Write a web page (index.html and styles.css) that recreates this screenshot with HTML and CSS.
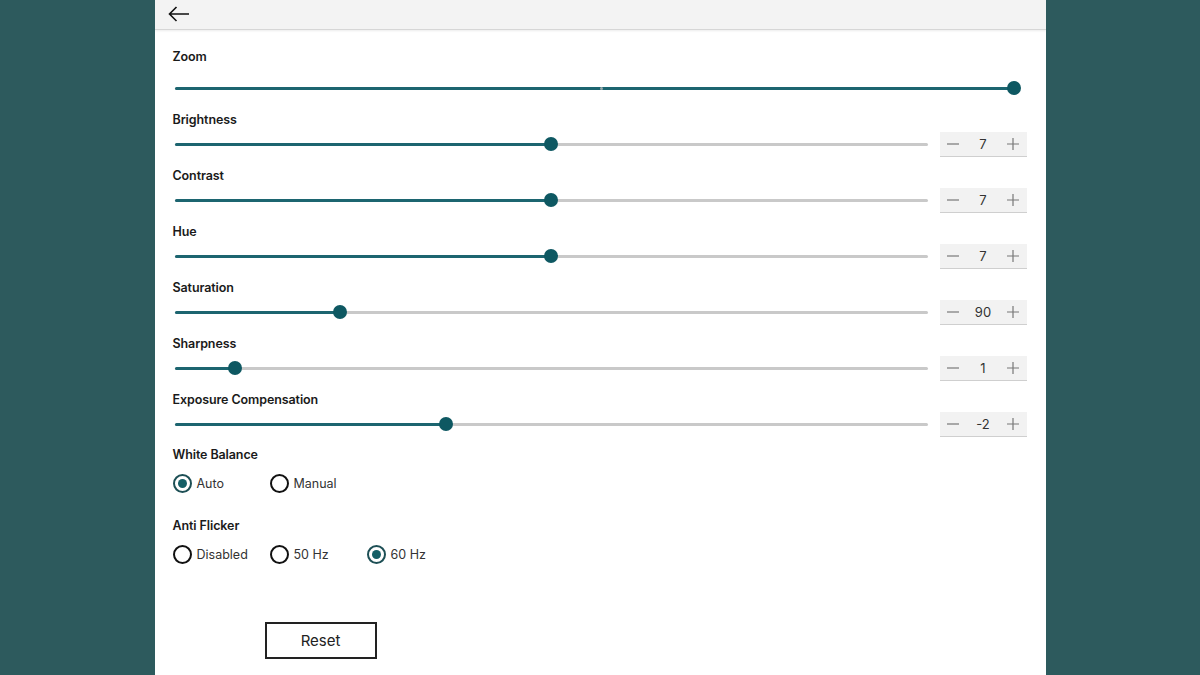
FILE: index.html
```html
<!DOCTYPE html>
<html lang="en">
<head>
    <meta charset="UTF-8">
    <title>Camera Settings</title>
    <link rel="stylesheet" href="styles.css">
</head>
<body>
    <div class="panel">
        <!-- header -->
        <div class="header">
            <svg class="back" width="22" height="16" viewBox="0 0 22 16">
                <path d="M21 8H1.5M8.5 1L1.5 8l7 7" fill="none" stroke="#111" stroke-width="1.6"/>
            </svg>
        </div>

        <div class="content">
            <!-- zoom -->
            <div class="label">Zoom</div>
            <div class="zoom-row">
                <div class="slider">
                    <div class="track"></div>
                    <div class="fill" style="width: 100%"></div>
                    <div class="tick"></div>
                    <div class="thumb" style="left: 100%"></div>
                </div>
            </div>

            <div class="setting">
                <div class="label">Brightness</div>
                <div class="row">
                    <div class="slider">
                        <div class="track"></div>
                        <div class="fill" style="width: 50%"></div>
                        <div class="thumb" style="left: 50%"></div>
                    </div>
                    <div class="stepper">
                        <svg width="12" height="12" viewBox="0 0 12 12"><path d="M0 6h12" stroke="#777" stroke-width="1.2"/></svg>
                        <span class="value">7</span>
                        <svg width="12" height="12" viewBox="0 0 12 12"><path d="M0 6h12M6 0v12" stroke="#777" stroke-width="1.2"/></svg>
                    </div>
                </div>
            </div>

            <div class="setting">
                <div class="label">Contrast</div>
                <div class="row">
                    <div class="slider">
                        <div class="track"></div>
                        <div class="fill" style="width: 50%"></div>
                        <div class="thumb" style="left: 50%"></div>
                    </div>
                    <div class="stepper">
                        <svg width="12" height="12" viewBox="0 0 12 12"><path d="M0 6h12" stroke="#777" stroke-width="1.2"/></svg>
                        <span class="value">7</span>
                        <svg width="12" height="12" viewBox="0 0 12 12"><path d="M0 6h12M6 0v12" stroke="#777" stroke-width="1.2"/></svg>
                    </div>
                </div>
            </div>

            <div class="setting">
                <div class="label">Hue</div>
                <div class="row">
                    <div class="slider">
                        <div class="track"></div>
                        <div class="fill" style="width: 50%"></div>
                        <div class="thumb" style="left: 50%"></div>
                    </div>
                    <div class="stepper">
                        <svg width="12" height="12" viewBox="0 0 12 12"><path d="M0 6h12" stroke="#777" stroke-width="1.2"/></svg>
                        <span class="value">7</span>
                        <svg width="12" height="12" viewBox="0 0 12 12"><path d="M0 6h12M6 0v12" stroke="#777" stroke-width="1.2"/></svg>
                    </div>
                </div>
            </div>

            <div class="setting">
                <div class="label">Saturation</div>
                <div class="row">
                    <div class="slider">
                        <div class="track"></div>
                        <div class="fill" style="width: 22%"></div>
                        <div class="thumb" style="left: 22%"></div>
                    </div>
                    <div class="stepper">
                        <svg width="12" height="12" viewBox="0 0 12 12"><path d="M0 6h12" stroke="#777" stroke-width="1.2"/></svg>
                        <span class="value">90</span>
                        <svg width="12" height="12" viewBox="0 0 12 12"><path d="M0 6h12M6 0v12" stroke="#777" stroke-width="1.2"/></svg>
                    </div>
                </div>
            </div>

            <div class="setting">
                <div class="label">Sharpness</div>
                <div class="row">
                    <div class="slider">
                        <div class="track"></div>
                        <div class="fill" style="width: 8%"></div>
                        <div class="thumb" style="left: 8%"></div>
                    </div>
                    <div class="stepper">
                        <svg width="12" height="12" viewBox="0 0 12 12"><path d="M0 6h12" stroke="#777" stroke-width="1.2"/></svg>
                        <span class="value">1</span>
                        <svg width="12" height="12" viewBox="0 0 12 12"><path d="M0 6h12M6 0v12" stroke="#777" stroke-width="1.2"/></svg>
                    </div>
                </div>
            </div>

            <div class="setting">
                <div class="label">Exposure Compensation</div>
                <div class="row">
                    <div class="slider">
                        <div class="track"></div>
                        <div class="fill" style="width: 36%"></div>
                        <div class="thumb" style="left: 36%"></div>
                    </div>
                    <div class="stepper">
                        <svg width="12" height="12" viewBox="0 0 12 12"><path d="M0 6h12" stroke="#777" stroke-width="1.2"/></svg>
                        <span class="value">-2</span>
                        <svg width="12" height="12" viewBox="0 0 12 12"><path d="M0 6h12M6 0v12" stroke="#777" stroke-width="1.2"/></svg>
                    </div>
                </div>
            </div>

            <!-- white balance -->
            <div class="group wb">
                <div class="label">White Balance</div>
                <div class="radios">
                    <div class="radio checked"><span class="circle"></span>Auto</div>
                    <div class="radio"><span class="circle"></span>Manual</div>
                </div>
            </div>

            <!-- anti flicker -->
            <div class="group flicker">
                <div class="label">Anti Flicker</div>
                <div class="radios">
                    <div class="radio"><span class="circle"></span>Disabled</div>
                    <div class="radio"><span class="circle"></span>50 Hz</div>
                    <div class="radio checked"><span class="circle"></span>60 Hz</div>
                </div>
            </div>

            <button class="btn-reset">Reset</button>
        </div>
    </div>
</body>
</html>
```

FILE: styles.css
```css
/* page */
body {
    margin: 0;
    height: 100vh;
    overflow: hidden;
    background-color: #2d5a5d;
    font-family: 'Inter', 'Noto Sans', sans-serif;
    color: #111;
}

.panel {
    width: 891px;
    height: 675px;
    margin: 0 auto;
    background-color: white;
    overflow: hidden;
}

.header {
    height: 29px;
    background-color: #f3f3f3;
    border-bottom: 1px solid #d6d6d6;
    box-shadow: 0 1px 2px rgba(0, 0, 0, 0.08);
    display: flex;
    align-items: center;
    padding-left: 13px;
}

.back {
    margin-top: -2px;
}

.content {
    padding: 18px 19px 0 18px;
}

.label {
    font-size: 12.5px;
    font-weight: 600;
    letter-spacing: -0.1px;
    line-height: 18px;
    color: #1a1a1a;
}

/* sliders */
.zoom-row {
    display: flex;
    height: 20px;
    align-items: center;
    margin-top: 12px;
    padding: 0 13px 0 2px;
    margin-bottom: 13px;
}

.setting {
    margin-bottom: 10px;
}

.row {
    display: flex;
    align-items: center;
    height: 26px;
    margin-top: 2px;
    padding-left: 2px;
}

.slider {
    position: relative;
    flex: 1;
    height: 14px;
}

.track, .fill {
    position: absolute;
    left: 0;
    top: 6px;
    height: 3px;
    border-radius: 2px;
}

.track {
    right: 0;
    background-color: #c9c9c9;
}

.fill {
    background-color: #1c6570;
}

.tick {
    position: absolute;
    left: 50.7%;
    top: 6px;
    width: 3px;
    height: 3px;
    border-radius: 50%;
    background-color: #9aa9ab;
}

.thumb {
    position: absolute;
    top: 0;
    width: 14px;
    height: 14px;
    margin-left: -7px;
    border-radius: 50%;
    background-color: #0e5862;
}

/* stepper */
.stepper {
    width: 87px;
    height: 25px;
    margin-left: 12px;
    background-color: #f2f2f2;
    border-bottom: 1px solid #cfcfcf;
    display: flex;
    align-items: center;
    justify-content: space-between;
    padding: 0 7px;
    box-sizing: border-box;
}

.value {
    font-size: 13px;
    color: #333;
}

/* radios */
.group.wb {
    margin-top: -1px;
}

.group.flicker {
    margin-top: 22px;
}

.radios {
    display: flex;
    margin-top: 7px;
    height: 24px;
    align-items: center;
}

.radio {
    width: 97px;
    display: flex;
    align-items: center;
    font-size: 12.5px;
    color: #333;
}

.group.flicker .radios {
    margin-top: 7px;
}

.circle {
    width: 15px;
    height: 15px;
    border: 2px solid #111;
    border-radius: 50%;
    margin-right: 5px;
    position: relative;
}

.radio.checked .circle {
    border-color: #1d4f55;
}

.radio.checked .circle::after {
    content: "";
    position: absolute;
    left: 3px;
    top: 3px;
    width: 9px;
    height: 9px;
    border-radius: 50%;
    background-color: #155f66;
}

/* reset button */
.btn-reset {
    display: block;
    margin: 56px 0 0 92px;
    width: 112px;
    height: 37px;
    background-color: white;
    border: 2px solid #222;
    font-family: 'Inter', 'Noto Sans', sans-serif;
    font-size: 15px;
    color: #222;
    cursor: pointer;
}
```
